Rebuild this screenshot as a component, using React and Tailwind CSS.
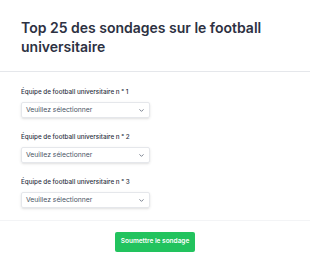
import React from 'react';

const teams = [1, 2, 3];

const Chevron = () => (
    <svg className="w-[7px] h-[7px] text-gray-500" fill="none" stroke="currentColor" viewBox="0 0 24 24">
        <path strokeLinecap="round" strokeLinejoin="round" strokeWidth={3} d="M6 9l6 6 6-6" />
    </svg>
);

const App = () => {
    return (
        <div className="w-[310px] h-[268px] bg-white font-['Inter',sans-serif] text-gray-800">
            {/* Titre */}
            <div className="px-[21px] pt-[18px] pb-[15px] border-b border-gray-200">
                <h1 className="text-[14px] leading-[19px] font-semibold text-[#2d3142]">
                    Top 25 des sondages sur le football universitaire
                </h1>
            </div>

            {/* Sélections */}
            <div className="px-[21px] pt-[16px] pb-[12px] border-b border-gray-100">
                {teams.map((n) => (
                    <div key={n} className="mb-[15px] last:mb-0">
                        <label className="block text-[6.3px] leading-[8px] font-medium text-[#2d3142] mb-[6px]">
                            Équipe de football universitaire n ° {n}
                        </label>
                        <div className="w-[129px] h-[16px] border border-gray-200 rounded-[2px] flex items-center justify-between px-[4px] shadow-sm">
                            <span className="text-[6.8px] text-gray-600">Veuillez sélectionner</span>
                            <Chevron />
                        </div>
                    </div>
                ))}
            </div>

            {/* Bouton */}
            <div className="flex justify-center pt-[11px]">
                <button className="w-[80px] h-[20px] bg-[#22c35e] rounded-[2px] text-white text-[6.5px] font-semibold">
                    Soumettre le sondage
                </button>
            </div>
        </div>
    );
};

export default App;
